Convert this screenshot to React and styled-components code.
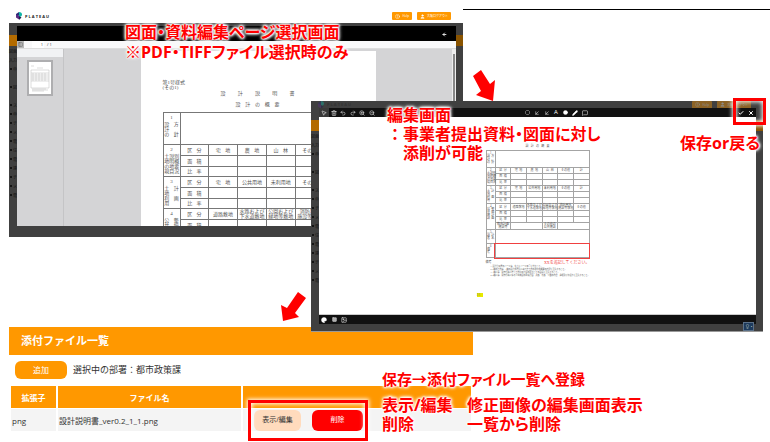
import React from 'react';
import styled, { createGlobalStyle, css } from 'styled-components';
import {
  ArrowLeft, Check, X, MousePointer2, Trash2, Undo2, Redo2, ZoomIn, ZoomOut,
  Octagon, ArrowDownLeft, Circle, Pencil, MessageSquare, Palette, Square, Image,
  Lightbulb, PanelLeft, User, CircleHelp,
} from 'lucide-react';

const ORANGE = '#ff9800';
const RED = '#ff0000';

const GlobalStyle = createGlobalStyle`
  * { box-sizing: border-box; }
  body {
    margin: 0;
    background: #fff;
    color: #333;
    font-family: "Open Sans", "Noto Sans CJK JP", sans-serif;
  }
  button, input { font: inherit; color: inherit; margin: 0; padding: 0; border: 0; background: none; }
  p, h1, h2 { margin: 0; }
`;

/* ---------- canvas ---------- */

const Canvas = styled.main`
  display: grid;
  grid-template-columns: 9px 302fr 152fr 10fr 290fr 7px;
  grid-template-rows: 9px 92px 136px 90px 5px auto;
  min-height: 100vh;
  overflow: hidden;
`;

const TopRule = styled.div`
  grid-area: 2 / 4 / 3 / 7;
  border-top: 1px solid #000;
`;

const Window = styled.section`
  position: relative;
  display: flex;
  flex-direction: column;
  min-width: 0;
  background: #fff;
`;

const PickerWindow = styled(Window)`
  grid-area: 2 / 2 / 4 / 4;
`;

const EditorWindow = styled(Window)`
  grid-area: 3 / 3 / 6 / 6;
  z-index: 2;
  background: #404040;
  border-bottom: 1px solid #999;
`;

const FilesPanel = styled(Window)`
  grid-area: 5 / 2 / 7 / 5;
`;

/* ---------- site header ---------- */

const SiteHeader = styled.header`
  display: flex;
  flex: none;
  align-items: center;
  justify-content: space-between;
  height: ${(p) => (p.$dim ? '7px' : '14px')};
  padding: 0 12px 0 7px;
  overflow: hidden;
  opacity: ${(p) => (p.$dim ? 0.4 : 1)};
  background: ${(p) => (p.$dim ? '#404040' : '#fff')};
`;

const Brand = styled.a`
  display: flex;
  align-items: center;
  gap: 3px;
  color: #222;
  font-size: 4px;
  font-weight: 700;
  line-height: 7px;
  white-space: pre;
  text-decoration: none;
`;

const HeaderActions = styled.div`
  display: flex;
  gap: 5px;
`;

const HeaderButton = styled.button`
  display: flex;
  align-items: center;
  gap: 2px;
  height: 8px;
  padding: 0 3px;
  border-radius: 1px;
  background: ${ORANGE};
  color: #fff;
  font-size: 3px;
  line-height: 8px;
  white-space: nowrap;
`;

function Header({ dim }) {
  return (
    <SiteHeader $dim={dim}>
      <Brand href="#">
        <svg width="6" height="8" viewBox="0 0 12 16" aria-hidden="true">
          <path d="M0 4 6 0v7l-6 3z" fill="#2a2d78" />
          <path d="M6 0c4 0 6 2 6 5s-2 5-6 5z" fill="#10b5a6" />
          <path d="M0 5l6 3v7L0 11z" fill="#5a2a83" />
          <path d="M6 8l5 3-5 5z" fill="#1b1f4e" />
        </svg>
        P L A T E A U
      </Brand>
      <HeaderActions>
        <HeaderButton><CircleHelp size={5} />Help</HeaderButton>
        <HeaderButton><User size={5} fill="#fff" />大阪ログアウト</HeaderButton>
      </HeaderActions>
    </SiteHeader>
  );
}

/* ---------- dimmed page behind a dialog ---------- */

const Backdrop = styled.div`
  display: flex;
  flex: 1;
  min-height: 0;
  background: #404040;
`;

const Edge = styled.div`
  flex: none;
  width: ${(p) => (p.$right ? '7px' : '8px')};
  color: #141414;
  font-size: 4px;
  line-height: 9px;
  white-space: nowrap;
`;

const EdgeTab = styled.div`
  height: 11px;
  margin: 12px 0 1px;
  background: ${(p) => (p.$right ? '#8a5400' : '#b36b00')};
`;

const EdgeLine = styled.p`
  min-height: 9px;
  ${(p) => p.$dot && css`
    &::before {
      content: "";
      display: inline-block;
      width: 2px;
      height: 2px;
      margin: 0 1px 1px;
      background: #141414;
    }
  `}
`;

const edgeLines = [
  { t: '図面' }, { t: '入力' }, { t: '申', dot: true }, { t: '' }, { t: '図', dot: true }, { t: '' },
  { t: 'ス', dot: true }, { t: '申', dot: true }, { t: 'チ', dot: true }, { t: 'メ', dot: true },
  { t: '電', dot: true }, { t: '住', dot: true }, { t: '電', dot: true }, { t: '連', dot: true },
  { t: 'チ', dot: true }, { t: 'メ', dot: true }, { t: '電', dot: true },
];

function LeftEdge() {
  return (
    <Edge aria-hidden="true">
      <EdgeTab />
      {edgeLines.map((l, i) => <EdgeLine key={i} $dot={l.dot}>{l.t}</EdgeLine>)}
    </Edge>
  );
}

/* ---------- page picker ---------- */

const Dialog = styled.div`
  display: flex;
  flex: 1;
  flex-direction: column;
  min-width: 0;
  margin: ${(p) => (p.$flush ? '0 0 7px' : '3px 0 11px')};
  overflow: hidden;
  background: #fff;
`;

const BlackBar = styled.div`
  display: flex;
  flex: none;
  align-items: center;
  justify-content: flex-end;
  height: 15px;
  padding: 2px 7px 0 0;
  background: #000;
`;

const IconButton = styled.button`
  display: grid;
  place-items: center;
  width: ${(p) => (p.$wide ? '10px' : '9px')};
  height: 9px;
  background: ${(p) => (p.$active ? '#3a3a3a' : 'transparent')};
  color: ${(p) => p.$color || '#fff'};
  font-size: 6px;
  line-height: 9px;
`;

const PdfToolbar = styled.div`
  display: flex;
  flex: none;
  align-items: center;
  gap: 3px;
  height: 8px;
  background: #f9f9fa;
  border-bottom: 1px solid #ddd;
  font-size: 4px;
  line-height: 7px;
`;

const SidebarToggle = styled(IconButton)`
  width: 7px;
  height: 7px;
  background: #b8b8b8;
`;

const PageInput = styled.input`
  width: 12px;
  height: 7px;
  margin-left: 5px;
  padding-right: 1px;
  background: #fff;
  text-align: right;
`;

const PdfBody = styled.div`
  display: flex;
  flex: 1;
  min-height: 0;
  background: #d4d4d6;
`;

const Sidebar = styled.aside`
  flex: none;
  width: 47px;
  border-right: 1px solid #c4c4c6;
`;

const SidebarHead = styled.div`
  height: 8px;
  background: #f1f2f4;
`;

const Thumb = styled.button`
  display: block;
  margin: 3px 0 0 10px;
  border: 2px solid #aeaeb0;
  background: #fff;
  svg { display: block; }
`;

const Viewer = styled.div`
  display: flex;
  flex: 1;
  justify-content: center;
  min-width: 0;
  padding-top: ${(p) => (p.$flush ? '0' : '2px')};
  overflow: hidden;
`;

const ScrollTrack = styled.div`
  flex: none;
  width: 4px;
  padding: 5px 1px 0;
  background: #eee;
`;

const ScrollThumb = styled.div`
  height: 100%;
  background: #888;
`;

/* ---------- paper form ---------- */

const Paper = styled.article`
  flex: none;
  color: #555;
  background: #fff;
  font-family: "Liberation Serif", "Noto Sans CJK JP", serif;
  ${(p) => (p.$large
    ? css`width: 235px; padding: 29px 22px 0; font-size: 5px; line-height: 5px;`
    : css`width: 122px; padding: 28px 9px 0; font-size: 3px; line-height: 3px;`)}
`;

const Spread = styled.p`
  width: ${(p) => p.$w};
  margin: ${(p) => p.$m || '0 auto'};
  text-align: justify;
  text-align-last: justify;
  white-space: nowrap;
`;

const FormTable = styled.table`
  width: 100%;
  table-layout: fixed;
  border-collapse: collapse;
  ${(p) => (p.$large
    ? css`margin-top: 5px; --line: #777; --num: 9px; --row: 11px; --third: 10px; --first: 32px; --tall: 28px;`
    : css`margin-top: 2px; --line: #a4a4a4; --num: 4px; --row: 6px; --third: 6px; --first: 17px; --tall: 14px;`)}
  td, th { padding: 0; border: 1px solid var(--line); font-weight: 400; white-space: nowrap; }
`;

const FormRow = styled.tr`
  height: ${(p) => `var(--${p.$kind || 'row'})`};
`;

const GroupCell = styled.th`
  vertical-align: top;
`;

const GroupNumber = styled.p`
  line-height: var(--num);
`;

const AnswerCell = styled.td`
  outline: 1px solid #f04040;
`;

const TwoLines = styled.span`
  display: block;
  font-size: ${(p) => (p.$large ? '5px' : '3px')};
  line-height: ${(p) => (p.$large ? '5px' : '3px')};
  white-space: pre;
`;

const Col = styled.col`
  width: ${(p) => p.$w};
`;

const groups = [
  { n: '2', label: ['土説別', '地明概', 'の地要', '現目況'], heads: ['宅 地', '農 地', '山 林', 'その他', '計'] },
  { n: '3', label: ['土 計', '地', '利 画', '用'], heads: ['宅 地', '公共用地', '未利用地', 'その他', '計'] },
  { n: '4', label: ['公 整', '共 備', '施 計', '設 画'], heads: ['道路敷地', '水路および\n下水道敷地', '公園および\n緑地等敷地', '消防用水\n施設等敷地', 'その他'] },
];

function GroupLabel({ n, lines }) {
  return (
    <>
      <GroupNumber>{n}</GroupNumber>
      {lines.map((l) => <Spread key={l} $w="90%">{l}</Spread>)}
    </>
  );
}

function HeadText({ text, large }) {
  const spaced = text.length === 3 && text[1] === ' ';
  return spaced ? <Spread $w="52%">{text}</Spread> : <TwoLines $large={large}>{text}</TwoLines>;
}

function DesignForm({ large }) {
  return (
    <FormTable $large={large}>
      <colgroup>
        <Col $w="9%" />
        <Col $w="15%" />
      </colgroup>
      <tbody>
        <FormRow $kind="first">
          <GroupCell scope="row"><GroupLabel n="1" lines={['設 方', '計', 'の 針']} /></GroupCell>
          <td colSpan={6} />
        </FormRow>
        {groups.map((g) => (
          <React.Fragment key={g.n}>
            <FormRow>
              <GroupCell scope="rowgroup" rowSpan={g.n === '4' && !large ? 4 : 3}>
                <GroupLabel n={g.n} lines={g.label} />
              </GroupCell>
              <th><Spread $w="52%">区 分</Spread></th>
              {g.heads.map((h) => <th key={h}><HeadText text={h} large={large} /></th>)}
            </FormRow>
            <FormRow>
              <th><Spread $w="52%">面 積</Spread></th>
              <td /><td /><td /><td /><td />
            </FormRow>
            <FormRow $kind="third">
              <th><Spread $w="52%">比 率</Spread></th>
              <td /><td /><td /><td /><td />
            </FormRow>
          </React.Fragment>
        ))}
        {!large && (
          <>
            <FormRow>
              <th><TwoLines>{'都市計画\n施設等'}</TwoLines></th>
              <td colSpan={2} />
              <th><TwoLines>{'その他の\n公共施設'}</TwoLines></th>
              <td colSpan={2} />
            </FormRow>
            <FormRow $kind="tall">
              <GroupCell scope="row"><GroupLabel n="5" lines={['設 計', '者 名']} /></GroupCell>
              <td colSpan={6} />
            </FormRow>
            <FormRow $kind="tall">
              <GroupCell scope="row"><GroupLabel n="6" lines={['備', '考']} /></GroupCell>
              <AnswerCell colSpan={6} />
            </FormRow>
          </>
        )}
      </tbody>
    </FormTable>
  );
}

/* ---------- image editor ---------- */

const EditorBar = styled.div`
  display: flex;
  flex: none;
  align-items: center;
  justify-content: space-between;
  height: ${(p) => (p.$bottom ? '10px' : '9px')};
  background: #111;
  border-top: ${(p) => (p.$bottom ? '1px solid #ccc' : '0')};
`;

const ToolGroup = styled.div`
  display: flex;
`;

const MarkRow = styled.div`
  display: flex;
  justify-content: space-between;
  margin-top: 2px;
  line-height: 5px;
`;

const MarkText = styled.p`
  color: #f04040;
  font-size: 4px;
`;

const NoteList = styled.ol`
  margin: 0 -12px 0 0;
  padding: 0 0 0 5px;
  line-height: 3px;
  font-size: 2px;
  list-style-position: inside;
`;

const Highlight = styled.mark`
  display: block;
  width: 6px;
  margin: 16px 0 0 -9px;
  color: #777;
  background: #e8e800;
  font-size: 3px;
  line-height: 4px;
`;

const ChatButton = styled.button`
  position: absolute;
  right: 9px;
  bottom: 0;
  display: flex;
  align-items: center;
  justify-content: center;
  gap: 1px;
  width: 11px;
  height: 9px;
  border: 1px solid #5a7088;
  background: #1d3a5c;
  color: #cfd8c0;
  font-size: 4px;
`;

/* ---------- attached files ---------- */

const PanelTitle = styled.h2`
  height: 28px;
  padding-left: 12px;
  background: ${ORANGE};
  color: #fff;
  font-size: 11px;
  line-height: 27px;
`;

const AddRow = styled.div`
  display: flex;
  align-items: center;
  gap: 6px;
  padding: 6px 6px 7px;
  font-size: 9px;
  line-height: 18px;
`;

const PillButton = styled.button`
  width: ${(p) => p.$w};
  height: ${(p) => (p.$tall ? '21px' : '18px')};
  border-radius: 6px;
  background: ${(p) => p.$bg};
  color: ${(p) => p.$fg || '#fff'};
  font-size: ${(p) => (p.$tall ? '7px' : '8px')};
  line-height: 18px;
`;

const FileTable = styled.table`
  width: 100%;
  table-layout: fixed;
  border-collapse: separate;
  border-spacing: 2px 0;
  font-size: 8px;
  th { height: 22px; padding: 0; background: ${ORANGE}; color: #fff; }
  td { height: 23px; padding: 0 1px; background: #f4f4f4; border-top: 1px solid #fff; }
`;

const RowActions = styled.div`
  display: flex;
  gap: 11px;
  padding-left: 10px;
`;

/* ---------- annotations ---------- */

const Note = styled.div`
  position: absolute;
  z-index: 5;
  left: ${(p) => p.$x};
  right: ${(p) => p.$r};
  top: ${(p) => p.$y};
  color: ${RED};
  font-size: 16px;
  font-weight: 700;
  line-height: ${(p) => p.$lh || '19px'};
  white-space: nowrap;
  font-feature-settings: "palt";
  text-shadow: 0 0 2px #fff, 0 0 2px #fff, 0 0 3px #fff, 0 0 3px #fff, 0 0 4px #fff, 0 0 4px #fff;
`;

const NoteHeading = styled.p`
  font-size: 15px;
`;

const NoteColumns = styled.div`
  display: grid;
  grid-template-columns: 85px auto;
  margin-top: 7px;
`;

const WideColon = styled.span`
  display: inline-block;
  width: 16px;
  text-align: center;
`;

const RedFrame = styled.div`
  position: absolute;
  z-index: 4;
  left: ${(p) => p.$x};
  right: ${(p) => p.$r};
  top: ${(p) => p.$y};
  width: ${(p) => p.$w};
  height: ${(p) => p.$h};
  border: 3px solid ${RED};
  box-shadow: 0 0 4px 1px #fff, inset 0 0 4px 1px #fff;
  pointer-events: none;
`;

const Arrow = styled.svg`
  position: absolute;
  z-index: 4;
  left: ${(p) => p.$x};
  right: ${(p) => p.$r};
  top: ${(p) => p.$y};
  fill: ${RED};
`;

const drawTools = [
  ['図形', <Octagon size={5} />], ['線', <ArrowDownLeft size={6} />], ['矢印', <ArrowDownLeft size={6} />],
  ['文字', 'A'], ['楕円', <Circle size={5} fill="#fff" />], ['ペン', <Pencil size={6} fill="#fff" />],
  ['コメント', <MessageSquare size={6} />],
];
const editTools = [
  ['選択', <MousePointer2 size={6} />], ['削除', <Trash2 size={6} />], ['元に戻す', <Undo2 size={6} />],
  ['やり直す', <Redo2 size={6} />], ['拡大', <ZoomIn size={6} />], ['縮小', <ZoomOut size={6} />],
];
const viewTools = [
  ['色', <Palette size={6} fill="#fff" />], ['枠', <Square size={5} fill="#aaa" />], ['画像', <Image size={6} />],
];

function Tools({ items, wide, activeFirst }) {
  return (
    <ToolGroup>
      {items.map(([name, icon], i) => (
        <IconButton key={name} aria-label={name} $wide={wide || i % 2 === 0} $active={activeFirst && i === 0}>
          {icon}
        </IconButton>
      ))}
    </ToolGroup>
  );
}

function PagePicker() {
  return (
    <PickerWindow>
      <Header />
      <Backdrop>
        <LeftEdge />
        <Dialog>
          <BlackBar>
            <IconButton aria-label="戻る"><ArrowLeft size={5} strokeWidth={4} /></IconButton>
          </BlackBar>
          <PdfToolbar>
            <SidebarToggle aria-label="サイドバー" $color="#555"><PanelLeft size={5} /></SidebarToggle>
            <PageInput aria-label="ページ" defaultValue="1" />
            <span>/ 1</span>
          </PdfToolbar>
          <PdfBody>
            <Sidebar>
              <SidebarHead />
              <Thumb aria-label="1ページ">
                <svg width="22" height="32" viewBox="0 0 22 32" fill="none" stroke="#bbb" strokeWidth="0.5">
                  <path d="M2 4h3M8 6h6M2 8h18v18H2zM2 11h18M2 13h18M2 15h18M2 17h18M2 19h18M4 11v8M7 11v8M10 11v8M13 11v8M16 11v8M3 27h14M3 28h16M3 29h12" />
                </svg>
              </Thumb>
            </Sidebar>
            <Viewer>
              <Paper $large>
                <p>第1号様式</p>
                <p>(その1)</p>
                <Spread $w="74px" $m="1px auto 6px 58px">設 計 説 明 書</Spread>
                <Spread $w="44px" $m="0 auto 0 73px">設 計 の 概 要</Spread>
                <DesignForm large />
              </Paper>
            </Viewer>
            <ScrollTrack><ScrollThumb /></ScrollTrack>
          </PdfBody>
        </Dialog>
        <Edge $right><EdgeTab $right /></Edge>
      </Backdrop>
      <Note $x="116px" $y="13px" $lh="20px">
        <p>図面・資料編集ページ選択画面</p>
        <p>※PDF・TIFFファイル選択時のみ</p>
      </Note>
      <Arrow $r="-33px" $y="61px" width="24" height="31" viewBox="0 0 24 31" aria-hidden="true">
        <path d="M1 6 9 0 18 14 23 10 21 31 4 25 9 21z" />
      </Arrow>
    </PickerWindow>
  );
}

function ImageEditor() {
  return (
    <EditorWindow>
      <Header dim />
      <Backdrop>
        <LeftEdge />
        <Dialog $flush>
          <EditorBar>
            <Tools items={editTools} activeFirst />
            <Tools items={drawTools} />
            <Tools items={[['保存', <Check size={6} strokeWidth={4} />], ['閉じる', <X size={6} strokeWidth={4} />]]} wide />
          </EditorBar>
          <Viewer $flush>
            <Paper>
              <Spread $w="24px">設 計 の 概 要</Spread>
              <DesignForm />
              <MarkRow>
                <p>備考</p>
                <MarkText>XXを追記してください。</MarkText>
              </MarkRow>
              <NoteList>
                <li>設計説明書のページは、左上にページ番号を付すこと。</li>
                <li>2欄の土地は、1欄の設計の方針に基づき土地の現況の概要の内訳を記入すること。</li>
                <li>3欄には、開発行為に伴う土地利用計画の区分ごとの面積を記入すること。</li>
                <li>4欄には、開発行為に係る公共施設の整備計画、道路、水路、公園の内容、種類及び管理者を記入すること。</li>
              </NoteList>
              <Highlight>1/1</Highlight>
            </Paper>
          </Viewer>
          <EditorBar $bottom><Tools items={viewTools} wide /></EditorBar>
        </Dialog>
        <Edge $right><EdgeTab $right /></Edge>
      </Backdrop>
      <ChatButton aria-label="ヒント"><Lightbulb size={5} />•</ChatButton>
      <Note $x="76px" $y="5px">
        <p>編集画面</p>
        <p><WideColon>：</WideColon>事業者提出資料・図面に対し</p>
        <p>　添削が可能</p>
      </Note>
      <RedFrame $r="-3px" $y="-3px" $w="33px" $h="27px" />
      <Note $r="3px" $y="33px">保存or戻る</Note>
    </EditorWindow>
  );
}

function AttachedFiles() {
  return (
    <FilesPanel>
      <PanelTitle>添付ファイル一覧</PanelTitle>
      <AddRow>
        <PillButton $w="52px" $bg={ORANGE}>追加</PillButton>
        <span>選択中の部署：都市政策課</span>
      </AddRow>
      <FileTable>
        <colgroup><Col $w="45px" /><Col $w="183px" /><Col /></colgroup>
        <thead>
          <tr><th>拡張子</th><th>ファイル名</th><th aria-label="操作" /></tr>
        </thead>
        <tbody>
          <tr>
            <td>png</td>
            <td>設計説明書_ver0.2_1_1.png</td>
            <td>
              <RowActions>
                <PillButton $w="47px" $tall $bg="#ffdbbd" $fg="#333">表示/編集</PillButton>
                <PillButton $w="51px" $tall $bg={RED}>削除</PillButton>
              </RowActions>
            </td>
          </tr>
        </tbody>
      </FileTable>
      <RedFrame $x="239px" $y="73px" $w="120px" $h="41px" />
      <Note $x="373px" $y="43px">
        <NoteHeading>保存→添付ファイル一覧へ登録</NoteHeading>
        <NoteColumns>
          <span>表示/編集</span><span>修正画像の編集画面表示</span>
          <span>削除</span><span>一覧から削除</span>
        </NoteColumns>
      </Note>
      <Arrow $x="272px" $y="-35px" width="26" height="30" viewBox="0 0 26 30" aria-hidden="true">
        <path d="M17 0 25 6 14 21 18 25 2 29 0 13 6 16z" />
      </Arrow>
    </FilesPanel>
  );
}

export default function App() {
  return (
    <>
      <GlobalStyle />
      <Canvas>
        <TopRule />
        <PagePicker />
        <ImageEditor />
        <AttachedFiles />
      </Canvas>
    </>
  );
}
